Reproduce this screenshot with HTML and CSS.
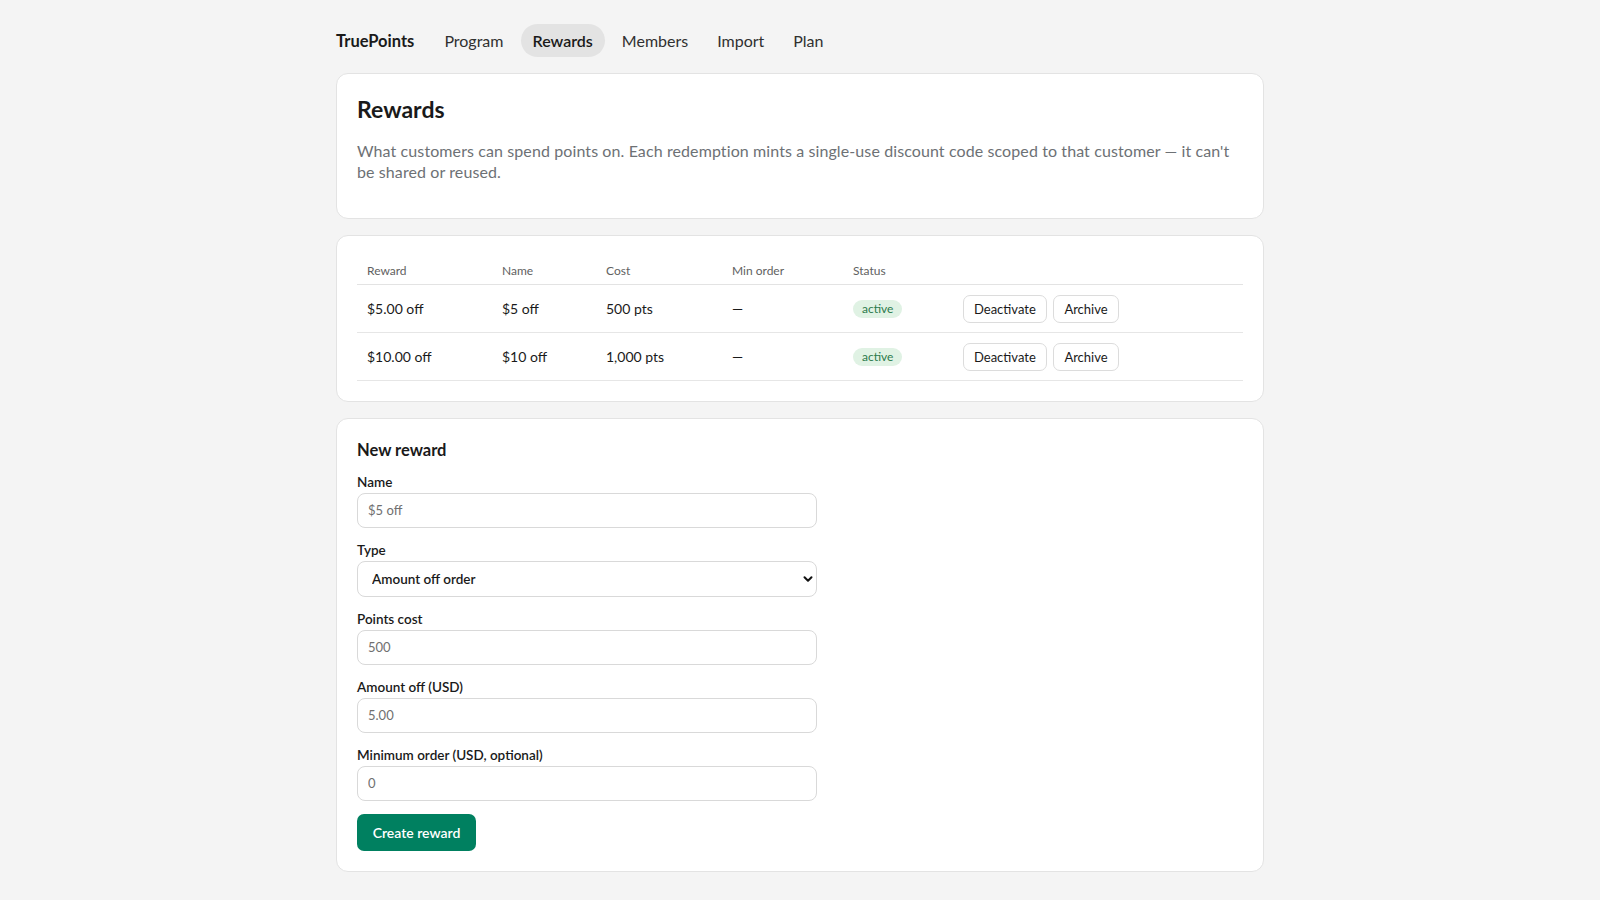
FILE: index.html
```html
<!DOCTYPE html>
<html lang="en">
<head>
    <meta charset="UTF-8">
    <meta name="viewport" content="width=device-width, initial-scale=1.0">
    <title>TruePoints - Rewards</title>
    <link rel="stylesheet" href="styles.css">
</head>
<body>
    <div class="container">
        <nav class="nav">
            <span class="brand">TruePoints</span>
            <a href="#" class="nav-link">Program</a>
            <a href="#" class="nav-link current">Rewards</a>
            <a href="#" class="nav-link">Members</a>
            <a href="#" class="nav-link">Import</a>
            <a href="#" class="nav-link">Plan</a>
        </nav>

        <div class="card">
            <h1>Rewards</h1>
            <p class="lead">What customers can spend points on. Each redemption mints a single-use discount code scoped to that customer — it can't be shared or reused.</p>
        </div>

        <div class="card">
            <table class="rewards-table">
                <thead>
                    <tr>
                        <th class="col-reward">Reward</th>
                        <th class="col-name">Name</th>
                        <th class="col-cost">Cost</th>
                        <th class="col-min">Min order</th>
                        <th class="col-status">Status</th>
                        <th></th>
                    </tr>
                </thead>
                <tbody>
                    <tr>
                        <td>$5.00 off</td>
                        <td>$5 off</td>
                        <td>500 pts</td>
                        <td>—</td>
                        <td><span class="pill">active</span></td>
                        <td class="actions">
                            <button class="btn">Deactivate</button>
                            <button class="btn">Archive</button>
                        </td>
                    </tr>
                    <tr>
                        <td>$10.00 off</td>
                        <td>$10 off</td>
                        <td>1,000 pts</td>
                        <td>—</td>
                        <td><span class="pill">active</span></td>
                        <td class="actions">
                            <button class="btn">Deactivate</button>
                            <button class="btn">Archive</button>
                        </td>
                    </tr>
                </tbody>
            </table>
        </div>

        <div class="card">
            <h3>New reward</h3>
            <form class="reward-form" onsubmit="return false">
                <div class="field">
                    <label for="name">Name</label>
                    <input id="name" type="text" placeholder="$5 off">
                </div>
                <div class="field">
                    <label for="type">Type</label>
                    <div class="select-wrap">
                        <select id="type">
                            <option>Amount off order</option>
                            <option>Percent off order</option>
                            <option>Free shipping</option>
                        </select>
                        <svg class="chevron" width="12" height="12" viewBox="0 0 12 12"><path d="M2.5 4.2 6 7.7l3.5-3.5" fill="none" stroke="#111" stroke-width="2" stroke-linecap="round" stroke-linejoin="round"/></svg>
                    </div>
                </div>
                <div class="field">
                    <label for="cost">Points cost</label>
                    <input id="cost" type="text" placeholder="500">
                </div>
                <div class="field">
                    <label for="amount">Amount off (USD)</label>
                    <input id="amount" type="text" placeholder="5.00">
                </div>
                <div class="field">
                    <label for="min">Minimum order (USD, optional)</label>
                    <input id="min" type="text" placeholder="0">
                </div>
                <div>
                    <button class="btn-primary" type="submit">Create reward</button>
                </div>
            </form>
        </div>
    </div>
</body>
</html>
```

FILE: styles.css
```css
body {
    margin: 0;
    background: #f4f4f4;
    color: #1a1a1a;
    font-family: Lato, "Noto Sans", sans-serif;
}
.container {
    max-width: 928px;
    margin: 0 auto;
    padding: 24px 0;
}
.nav {
    display: flex;
    align-items: center;
    gap: 5px;
    margin-bottom: 16px;
    font-size: 16px;
}
.brand {
    font-weight: bold;
    font-size: 16.5px;
    margin-right: 13px;
}
.nav-link {
    color: #303030;
    text-decoration: none;
    padding: 6px 12px;
    border-radius: 17px;
    line-height: 21px;
}
.nav-link.current {
    background: #e3e3e3;
    font-weight: 600;
    color: #1a1a1a;
}
.card {
    background: #fff;
    border: 1px solid #e3e3e3;
    border-radius: 12px;
    padding: 20px;
    margin-bottom: 16px;
}
h1 {
    font-size: 23px;
    line-height: 31px;
    margin: 0;
}
.lead {
    color: #6d7175;
    font-size: 16px;
    line-height: 20.8px;
    letter-spacing: 0.1px;
    margin: 16px 0 15px;
}
h3 {
    font-size: 16.5px;
    line-height: 22px;
    margin: 0 0 12px;
}
.rewards-table {
    width: 100%;
    border-collapse: collapse;
    font-size: 14px;
}
.rewards-table th {
    text-align: left;
    font-weight: normal;
    font-size: 12px;
    color: #616161;
    padding: 7px 10px 6px;
    border-bottom: 1px solid #e3e3e3;
}
.rewards-table td {
    padding: 10px 10px 9px;
    border-bottom: 1px solid #e6e6e6;
}
.col-reward { width: 115px; }
.col-name { width: 84px; }
.col-cost { width: 106px; }
.col-min { width: 101px; }
.col-status { width: 90px; }
.pill {
    display: inline-block;
    background: #e0f2e4;
    color: #2c7a4b;
    font-size: 12px;
    padding: 1px 9px 2px;
    border-radius: 10px;
}
.actions {
    white-space: nowrap;
}
.btn {
    font-family: inherit;
    font-size: 13px;
    color: #1a1a1a;
    background: #fff;
    border: 1px solid #dcdcdc;
    border-radius: 7px;
    padding: 5px 10px;
    margin-right: 3px;
    cursor: pointer;
}
.reward-form {
    display: flex;
    flex-direction: column;
    gap: 13px;
}
.field label {
    display: block;
    font-size: 13.5px;
    font-weight: 600;
    line-height: 18px;
    margin-bottom: 2px;
}
.field input,
.field select {
    box-sizing: border-box;
    width: 460px;
    height: 35px;
    padding: 0 10px;
    border: 1px solid #d9d9d9;
    border-radius: 8px;
    font-family: inherit;
    font-size: 13px;
    background: #fff;
}
.field input::placeholder {
    color: #707070;
}
.select-wrap {
    position: relative;
    width: 460px;
}
.field select {
    height: 36px;
    padding: 0 14px;
    appearance: none;
    font-size: 13.5px;
    font-weight: 600;
    color: #1a1a1a;
}
.chevron {
    position: absolute;
    right: 3px;
    top: 12px;
    pointer-events: none;
}
.btn-primary {
    background: #008060;
    color: #fff;
    border: none;
    border-radius: 7px;
    font-family: inherit;
    font-size: 14px;
    font-weight: 600;
    height: 37px;
    width: 119px;
    cursor: pointer;
}
```
